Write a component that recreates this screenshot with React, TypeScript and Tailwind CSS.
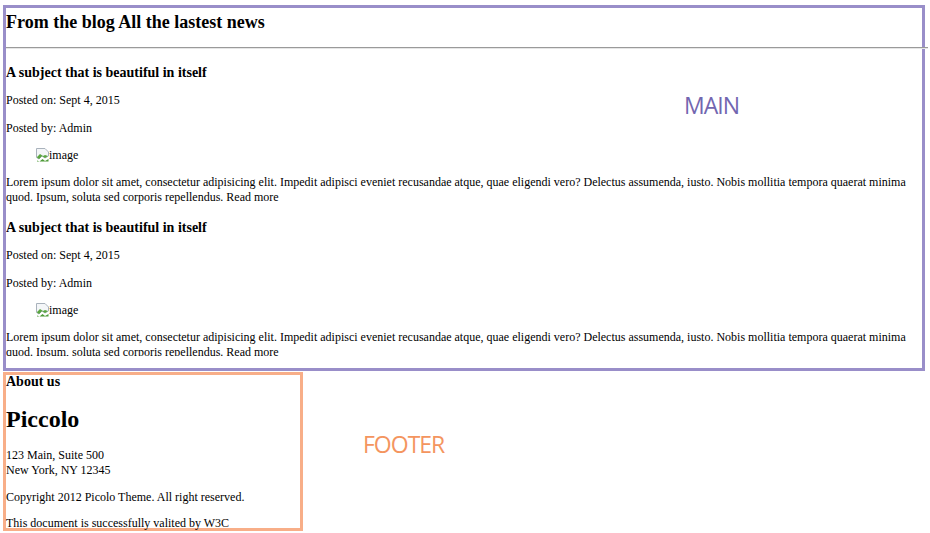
import React from "react";

const serif = { fontFamily: '"Liberation Serif", "Times New Roman", serif' };

function BrokenImage() {
  return (
    <div className="ml-[30px] flex h-[15px] items-end text-[12px] leading-[15px]">
      <svg width="13" height="14" viewBox="0 0 13 14" className="mb-[1px] shrink-0">
        <path d="M0.5 0.5 H9 L12.5 4 V8 L9 10 L6 8 L3 11 L0.5 9.5 Z" fill="#f4f6f8" stroke="#a9b2bc" />
        <path d="M1 9 L4 6 L7 8 L9 7 L12 8 L9 10 L6 8 L3 11 L1 9.5 Z" fill="#5aa640" />
        <path d="M1 12.5 L3.5 13.5 L6.5 11 L9 13 L12.5 11 V13.5 H1 Z" fill="#4e9a38" />
      </svg>
      <span>image</span>
    </div>
  );
}

function Article({ first }: { first?: boolean }) {
  return (
    <article className={first ? "" : "mt-[15px]"}>
      <h4 className="text-[14px] font-bold leading-[15px]">A subject that is beautiful in itself</h4>
      <p className="mt-[13px] text-[12px] leading-[15px]">Posted on: Sept 4, 2015</p>
      <p className="mt-[13px] text-[12px] leading-[15px]">Posted by: Admin</p>
      <div className="mt-[12px]">
        <BrokenImage />
      </div>
      <p className="mt-[12px] pr-[6px] text-[12px] leading-[15px]">
        Lorem ipsum dolor sit amet, consectetur adipisicing elit. Impedit adipisci eveniet recusandae atque, quae eligendi
        vero? Delectus assumenda, iusto. Nobis mollitia tempora quaerat minima quod. Ipsum, soluta sed corporis repellendus.
        Read more
      </p>
    </article>
  );
}

export default function App() {
  return (
    <div className="relative min-h-[533px] w-[930px] bg-white pt-[5px] text-black" style={serif}>
      <main className="ml-[3px] box-border h-[366px] w-[922px] border-[3px] border-[#998ec9]">
        <h2 className="mt-[4px] text-[18px] font-bold leading-[21px]">From the blog All the lastest news</h2>
        <hr className="mt-[14px] box-border h-[2px] w-[922px] border-0 border-t border-b border-t-[#9a9a9a] border-b-[#e6e6e6]" />
        <div className="h-[307px] overflow-hidden pt-[16px]">
          <Article first />
          <Article />
        </div>
      </main>

      <footer className="ml-[3px] mt-[1px] box-border h-[159px] w-[300px] border-[3px] border-[#f8ae88]">
        <h4 className="text-[14px] font-bold leading-[14px]">About us</h4>
        <h1 className="mt-[16px] text-[24px] font-bold leading-[28px]">Piccolo</h1>
        <p className="mt-[15px] text-[12px] leading-[15px]">
          123 Main, Suite 500
          <br />
          New York, NY 12345
        </p>
        <p className="mt-[12px] text-[12px] leading-[15px]">Copyright 2012 Picolo Theme. All right reserved.</p>
        <p className="mt-[11px] text-[12px] leading-[15px]">This document is successfully valited by W3C</p>
      </footer>

      <span
        className="absolute left-[684px] top-[91px] text-[23px] leading-[28px] tracking-[-1px] text-[#7266b0]"
        style={{ fontFamily: '"Open Sans", sans-serif' }}
      >
        MAIN
      </span>
      <span
        className="absolute left-[363px] top-[430px] text-[23px] leading-[28px] tracking-[-1px] text-[#f4955f]"
        style={{ fontFamily: '"Open Sans", sans-serif' }}
      >
        FOOTER
      </span>
    </div>
  );
}
